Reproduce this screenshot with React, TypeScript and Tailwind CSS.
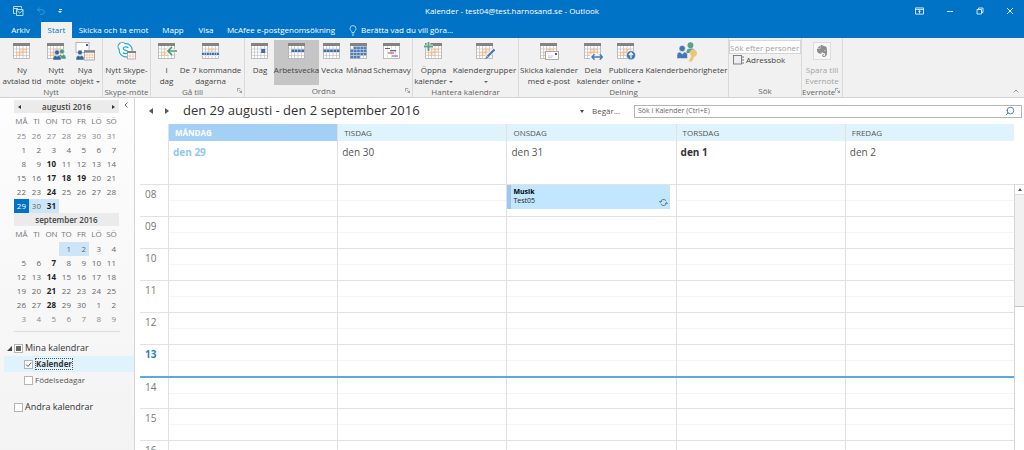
import React from "react";
import { ChevronUp, Search, Undo2 } from "lucide-react";
import { SiEvernote } from "react-icons/si";

type CalProps = { children?: React.ReactNode; accent?: boolean };

function Cal({ children, accent = true }: CalProps) {
  return (
    <svg viewBox="0 0 20 18" className="h-[18px] w-5 shrink-0" aria-hidden="true">
      <rect x="1.5" y="1.5" width="16" height="15" fill="#fff" stroke="#adadad" strokeWidth="0.8" />
      <rect x="1" y="1" width="17" height="3" fill="#838383" />
      <path d="M4.5 4v12.5M7.5 4v12.5M11 4v12.5M14.5 4v12.5M1.5 7h16M1.5 10.2h16M1.5 13.4h16" stroke="#c2c2c2" strokeWidth="0.7" />
      {accent && <path d="M7.7 7.2h3.2v3H7.7zM11.1 7.2h3.2v3h-3.2zM7.7 10.4h3.2v3H7.7zM4.6 10.4h3v3h-3z" fill="#fdeee2" stroke="#efae80" strokeWidth="0.6" />}
      {children}
    </svg>
  );
}

function Person({ x, y, color }: { x: number; y: number; color: string }) {
  return (
    <g fill={color} stroke="#f0f0f0" strokeWidth="0.5">
      <path d={`M${x - 4} ${y + 7.5}v-2a2.8 2.8 0 0 1 2.8-2.5l1.2 1 1.2-1a2.8 2.8 0 0 1 2.8 2.5v2z`} />
      <circle cx={x} cy={y} r="2.4" />
    </g>
  );
}

const icons: Record<string, React.ReactNode> = {
  appointment: <Cal />,
  meeting: (
    <Cal>
      <Person x={16} y={9.5} color="#4e9a78" />
      <Person x={11} y={10.5} color="#35649f" />
    </Cal>
  ),
  items: (
    <svg viewBox="0 0 20 20" className="h-5 w-5 shrink-0" aria-hidden="true">
      <rect x="1" y="0.5" width="13" height="10" fill="#fff" stroke="#a6a6a6" strokeWidth="0.8" />
      <rect x="11" y="2" width="2" height="2" fill="#35649f" />
      <rect x="9.5" y="8.5" width="10" height="9.5" fill="#fff" stroke="#9a9a9a" strokeWidth="0.8" />
      <path d="M9 8.5h11v2.2H9z" fill="#838383" />
      <path d="M12 11v7M14.7 11v7M17.3 11v7M9.5 13h10M9.5 15.5h10" stroke="#f0b48a" strokeWidth="0.6" />
      <Person x={5} y={10.5} color="#35649f" />
    </svg>
  ),
  skype: (
    <svg viewBox="0 0 20 18" className="h-[18px] w-5 shrink-0" aria-hidden="true">
      <path
        d="M8.5 1.6a6.3 6.3 0 0 1 6.4 7.7 4 4 0 0 1-5.4 5.5A6.4 6.4 0 0 1 2.3 7.5 4 4 0 0 1 8 1.7z"
        fill="#fff"
        stroke="#1ea7dc"
        strokeWidth="1.1"
      />
      <path d="M11.2 6C10.3 4.4 6.2 4.4 6.2 6.5c0 2.3 5 1.3 5 3.6 0 2.1-4.3 2-5.2.3" fill="none" stroke="#1ea7dc" strokeWidth="1.2" />
      <rect x="10.5" y="9.5" width="8" height="7.5" fill="#fff" stroke="#9a9a9a" strokeWidth="0.7" />
      <path d="M10 9h9v2h-9z" fill="#838383" />
      <path d="M13 11v6M16 11v6M10.5 14h8" stroke="#f0b48a" strokeWidth="0.6" />
    </svg>
  ),
  today: (
    <Cal>
      <path d="M9.5 9h10.5M14 5l-4 4 4 4" fill="none" stroke="#f0f0f0" strokeWidth="3.5" />
      <path d="M11 9h9M15 5l-4 4 4 4" fill="none" stroke="#4e9a78" strokeWidth="1.7" />
    </Cal>
  ),
  next7: (
    <Cal>
      <path d="M0 10h19v4H0z" fill="#dce7f4" />
      <path d="M1 11.8h17" stroke="#3a6bab" strokeWidth="2.2" strokeDasharray="1.9 0.6" />
    </Cal>
  ),
  day: (
    <Cal accent={false}>
      <rect x="11.2" y="7" width="4" height="4" fill="#3a6bab" />
    </Cal>
  ),
  workweek: (
    <Cal accent={false}>
      <path d="M4.5 8.8h13" stroke="#3a6bab" strokeWidth="2.4" strokeDasharray="2.7 0.6" />
    </Cal>
  ),
  week: (
    <Cal accent={false}>
      <path d="M1.5 8.8h16" stroke="#3a6bab" strokeWidth="2.4" strokeDasharray="2.7 0.6" />
    </Cal>
  ),
  month: (
    <Cal accent={false}>
      <path d="M4.8 5.7h13M1.5 8.8h16M1.5 12h16M1.5 15.1h10" stroke="#4a7dbb" strokeWidth="2.4" strokeDasharray="2.7 0.6" />
    </Cal>
  ),
  schedule: (
    <svg viewBox="0 0 20 18" className="h-[18px] w-5 shrink-0" aria-hidden="true">
      <rect x="1.5" y="1.5" width="16" height="15" fill="#fff" stroke="#adadad" strokeWidth="0.8" />
      <path d="M1 1h17v3H1z" fill="#838383" />
      <path d="M5.5 4v12.5M9.5 4v12.5M13.5 4v12.5" stroke="#d0d0d0" strokeWidth="0.6" />
      <path d="M3 6.5h5M10 14h6" stroke="#8b4a9c" strokeWidth="1.2" />
      <path d="M6 11h6" stroke="#d0603a" strokeWidth="1.2" />
      <path d="M8 8.7h6" stroke="#35649f" strokeWidth="1.2" />
    </svg>
  ),
  open: (
    <Cal>
      <path d="M4.5 0v9M0 4.5h9" stroke="#f0f0f0" strokeWidth="3.6" />
      <path d="M4.5 0v9M0 4.5h9" stroke="#5ba585" strokeWidth="1.8" />
    </Cal>
  ),
  groups: (
    <Cal>
      <path d="m20 7-9 9" stroke="#f0f0f0" strokeWidth="4" />
      <path d="m19.5 7.5-7 7" stroke="#4179b8" strokeWidth="2.2" />
      <path d="m10.5 17 1-3 2 2z" fill="#4179b8" />
    </Cal>
  ),
  send: (
    <Cal>
      <rect x="6.5" y="9.5" width="13" height="8" fill="#fff" stroke="#9a9a9a" strokeWidth="0.8" />
      <rect x="16" y="11" width="2" height="2" fill="#35649f" />
      <path d="M9 14h5M9 15.7h4" stroke="#b5b5b5" strokeWidth="0.7" />
    </Cal>
  ),
  share: (
    <Cal>
      <path d="M7 12h13v6H7z" fill="#f0f0f0" />
      <path d="M9 15h10M11.5 12.3 9 15l2.5 2.7M16.8 12.3l2.5 2.7-2.5 2.7" fill="none" stroke="#4179b8" strokeWidth="1.4" />
    </Cal>
  ),
  publish: (
    <Cal>
      <circle cx="15" cy="13.3" r="4.6" fill="#4179b8" stroke="#f0f0f0" strokeWidth="0.7" />
      <path d="M15 16.2v-5M12.9 13l2.1-2.2 2.1 2.2" fill="none" stroke="#fff" strokeWidth="1.2" />
    </Cal>
  ),
  permissions: (
    <svg viewBox="0 0 20 20" className="h-5 w-5 shrink-0" aria-hidden="true">
      <g fill="#5ba08c">
        <circle cx="13.5" cy="3.2" r="2.9" />
        <path d="M9.5 11V9a3 3 0 0 1 3-2.5h3a3 3 0 0 1 3 2.5v2z" />
      </g>
      <g fill="#4477b5" stroke="#f0f0f0" strokeWidth="0.5">
        <path d="M0 16.5V13a3 3 0 0 1 3-3l2.2 2L7.5 10a3 3 0 0 1 3 3v3.5z" />
        <circle cx="5.2" cy="6.5" r="3.1" />
      </g>
      <path d="m11.5 19.5 2.5-5.5a3.7 3.7 0 1 1 3.3.9l-.8 1.3.3 1.3-1.3.5-.8 2z" fill="#ecc675" stroke="#f0f0f0" strokeWidth="0.4" />
    </svg>
  ),
};

type Cmd = { icon: string; lines: string[]; w: string; menu?: boolean; active?: boolean };
type Group = { name: string; w: string; launcher?: boolean; cmds: Cmd[] };

const groups: Group[] = [
  {
    name: "Nytt",
    w: "w-[103px]",
    cmds: [
      { icon: "appointment", lines: ["Ny", "avtalad tid"], w: "w-11" },
      { icon: "meeting", lines: ["Nytt", "möte"], w: "w-6" },
      { icon: "items", lines: ["Nya", "objekt"], w: "w-[34px]", menu: true },
    ],
  },
  { name: "Skype-möte", w: "w-12", cmds: [{ icon: "skype", lines: ["Nytt Skype-", "möte"], w: "w-11" }] },
  {
    name: "Gå till",
    w: "w-[94px]",
    launcher: true,
    cmds: [
      { icon: "today", lines: ["I", "dag"], w: "w-[26px]" },
      { icon: "next7", lines: ["De 7 kommande", "dagarna"], w: "w-[62px]" },
    ],
  },
  {
    name: "Ordna",
    w: "w-[168px]",
    launcher: true,
    cmds: [
      { icon: "day", lines: ["Dag"], w: "w-7" },
      { icon: "workweek", lines: ["Arbetsvecka"], w: "w-[45px]", active: true },
      { icon: "week", lines: ["Vecka"], w: "w-[26px]" },
      { icon: "month", lines: ["Månad"], w: "w-7" },
      { icon: "schedule", lines: ["Schemavy"], w: "w-[38px]" },
    ],
  },
  {
    name: "Hantera kalendrar",
    w: "w-[106px]",
    cmds: [
      { icon: "open", lines: ["Öppna", "kalender"], w: "w-[38px]", menu: true },
      { icon: "groups", lines: ["Kalendergrupper", ""], w: "w-[64px]", menu: true },
    ],
  },
  {
    name: "Delning",
    w: "w-[210px]",
    cmds: [
      { icon: "send", lines: ["Skicka kalender", "med e-post"], w: "w-[60px]" },
      { icon: "share", lines: ["Dela", "kalender"], w: "w-7" },
      { icon: "publish", lines: ["Publicera", "online"], w: "w-[38px]", menu: true },
      { icon: "permissions", lines: ["Kalenderbehörigheter"], w: "w-[83px]" },
    ],
  },
];

function Caret() {
  return <span className="ml-0.5 inline-block border-x-2 border-t-2 border-x-transparent border-t-[#666] align-middle" />;
}

function Launcher() {
  return (
    <svg viewBox="0 0 6 6" className="absolute right-0.5 bottom-1 size-[5px]" aria-hidden="true">
      <path d="M.5 4V.5H4M2.5 2.5l3 3M5.5 3v2.5H3" fill="none" stroke="#777" strokeWidth="0.8" />
    </svg>
  );
}

function RibbonGroup({ name, w, launcher, children }: { name: string; w: string; launcher?: boolean; children: React.ReactNode }) {
  return (
    <section aria-label={name} className={`relative flex shrink-0 flex-col border-r border-[#dadada] pt-0.5 ${w}`}>
      <div className="flex h-[46px] justify-center">{children}</div>
      <div className={`text-center text-[8px] leading-3 text-[#666] ${launcher ? "pr-2.5" : ""}`}>{name}</div>
      {launcher && <Launcher />}
    </section>
  );
}

function Ribbon() {
  return (
    <div className="flex h-[60px] shrink-0 border-b border-[#d2d2d2] bg-[#f1f1f1] text-[8px] text-[#444]">
      {groups.map((g) => (
        <RibbonGroup key={g.name} name={g.name} w={g.w} launcher={g.launcher}>
          {g.cmds.map((c) => (
            <button
              key={c.icon}
              className={`flex shrink-0 flex-col items-center pt-0.5 leading-[11px] whitespace-nowrap ${c.w} ${c.active ? "bg-[#c5c5c5]" : ""}`}
            >
              <span className="flex h-[22px] shrink-0 items-start">{icons[c.icon]}</span>
              {c.lines.map((l, i) => (
                <span key={i} className="h-[11px]">
                  {l}
                  {c.menu && i === 1 && <Caret />}
                </span>
              ))}
            </button>
          ))}
        </RibbonGroup>
      ))}
      <RibbonGroup name="Sök" w="w-[73px]">
        <div className="flex w-full flex-col items-start">
          <input
            aria-label="Sök efter personer"
            placeholder="Sök efter personer"
            className="h-[14px] w-full border border-[#d6d6d6] bg-white text-[8px] placeholder:text-[#a0a0a0]"
          />
          <button className="flex items-center gap-0.5 pl-1 leading-3">
            <svg viewBox="0 0 11 10" className="h-[10px] w-[11px]" aria-hidden="true">
              <rect x="0.5" y="0.5" width="8" height="8.5" fill="#eeeef2" stroke="#777" strokeWidth="0.9" />
              <path d="M10 1v8" stroke="#777" strokeDasharray="2 1" />
            </svg>
            Adressbok
          </button>
        </div>
      </RibbonGroup>
      <RibbonGroup name="Evernote" w="w-[41px]" launcher>
        <button disabled className="flex flex-col items-center pt-0.5 leading-[11px] text-[#a3a3a3]">
          <span className="flex h-[22px] items-start">
            <span className="flex size-[18px] items-center justify-center border border-[#dcdcdc] bg-[#f7f7f7]">
              <SiEvernote className="size-3 text-[#8f8f8f]" />
            </span>
          </span>
          <span>Spara till</span>
          <span>Evernote</span>
        </button>
      </RibbonGroup>
      <button aria-label="Dölj menyfliksområdet" className="mt-auto mr-1 mb-0.5 ml-auto">
        <ChevronUp className="size-2 text-[#666]" />
      </button>
    </div>
  );
}

function TitleBar() {
  return (
    <header className="grid h-[22px] shrink-0 grid-cols-3 items-center text-white">
      <div className="flex items-center gap-3 pl-3">
        <button aria-label="Skicka och ta emot alla">
          <svg viewBox="0 0 12 12" className="size-3" fill="none" stroke="#b8dbf5" aria-hidden="true">
            <path d="M3.5 8.5h-2v-7h8v2M2 3.5h4M4.5 4.5h6.5v6H4.5zM4.5 5l3.2 3L11 5" />
          </svg>
        </button>
        <button aria-label="Ångra">
          <Undo2 className="size-2.5 text-[#4c9bda]" />
        </button>
        <button aria-label="Anpassa" className="flex flex-col items-center gap-px">
          <span className="h-px w-[3px] bg-white" />
          <span className="border-x-2 border-t-2 border-x-transparent border-t-white" />
        </button>
      </div>
      <h1 className="text-center text-[8px] whitespace-nowrap">Kalender - test04@test.harnosand.se - Outlook</h1>
      <div className="flex items-center justify-end gap-[22px] pr-[10px]">
        <button aria-label="Visningsalternativ">
          <svg viewBox="0 0 9 8" className="h-2 w-[9px]" fill="none" stroke="#fff" strokeWidth="0.8" aria-hidden="true">
            <path d="M.5.9h8v6.2h-8zM.5 2.4h8M4.5 6.5v-3M3.2 4.6l1.3-1.3 1.3 1.3" />
          </svg>
        </button>
        <button aria-label="Minimera">
          <svg viewBox="0 0 8 8" className="size-2" aria-hidden="true">
            <path d="M1 4.5h6" stroke="#fff" strokeWidth="0.8" />
          </svg>
        </button>
        <button aria-label="Återställ">
          <svg viewBox="0 0 8 8" className="size-2" fill="none" stroke="#fff" strokeWidth="0.8" aria-hidden="true">
            <path d="M1 2.5h4.5V7H1zM2.5 2.3V1H7v4.5H5.7" />
          </svg>
        </button>
        <button aria-label="Stäng">
          <svg viewBox="0 0 8 8" className="size-2" aria-hidden="true">
            <path d="m1 1 6 6M7 1 1 7" stroke="#fff" strokeWidth="0.9" />
          </svg>
        </button>
      </div>
    </header>
  );
}

function Tabs() {
  return (
    <nav className="flex h-4 shrink-0 items-stretch text-[8px] whitespace-nowrap text-white">
      <button className="w-[41px]">Arkiv</button>
      <button className="w-[31px] bg-[#f1f1f1] text-[#0173c7]">Start</button>
      <button className="w-[83px]">Skicka och ta emot</button>
      <button className="w-9">Mapp</button>
      <button className="w-[30px]">Visa</button>
      <button className="w-[120px]">McAfee e-postgenomsökning</button>
      <button className="flex items-center gap-1 pl-2">
        <svg viewBox="0 0 8 11" className="h-[11px] w-2" fill="none" stroke="#d5eafa" strokeWidth="0.8" aria-hidden="true">
          <path d="M2.8 7.5C2.8 6 1 5.5 1 3.6a3 3 0 0 1 6 0C7 5.5 5.2 6 5.2 7.5zM2.8 9h2.4M3.2 10.3h1.6" />
        </svg>
        Berätta vad du vill göra...
      </button>
    </nav>
  );
}

type Month = { name: string; nav?: boolean; weeks: (number | null)[][]; bold: number[]; range: number[]; current?: number; muted: number[] };

const months: Month[] = [
  {
    name: "augusti 2016",
    nav: true,
    weeks: [
      [25, 26, 27, 28, 29, 30, 31],
      [1, 2, 3, 4, 5, 6, 7],
      [8, 9, 10, 11, 12, 13, 14],
      [15, 16, 17, 18, 19, 20, 21],
      [22, 23, 24, 25, 26, 27, 28],
      [29, 30, 31, null, null, null, null],
    ],
    bold: [10, 17, 18, 19, 24, 31],
    range: [30, 31],
    current: 29,
    muted: [0],
  },
  {
    name: "september 2016",
    weeks: [
      [null, null, null, 1, 2, 3, 4],
      [5, 6, 7, 8, 9, 10, 11],
      [12, 13, 14, 15, 16, 17, 18],
      [19, 20, 21, 22, 23, 24, 25],
      [26, 27, 28, 29, 30, 1, 2],
      [3, 4, 5, 6, 7, 8, 9],
    ],
    bold: [7, 14, 21, 28],
    range: [1, 2],
    muted: [5],
  },
];

const dayHeads = ["MÅ", "TI", "ON", "TO", "FR", "LÖ", "SÖ"];

function dayClass(m: Month, d: number | null, row: number) {
  if (d === null) return "";
  const edge = m.muted.includes(row);
  if (!edge && d === m.current) return row === 5 ? "bg-[#0173c7] text-white" : "text-[#666]";
  const lead = m.nav ? row === 5 : row === 0;
  const bold = !edge && m.bold.includes(d) ? "font-bold text-[#222]" : edge ? "text-[#888]" : "text-[#666]";
  return `${bold} ${lead && m.range.includes(d) ? "bg-[#cde6f7]" : ""}`;
}

function MiniMonth({ m }: { m: Month }) {
  return (
    <div>
      <div className="flex h-[13px] items-center justify-between bg-[#ebebeb] px-1">
        {m.nav ? (
          <button aria-label="Föregående månad" className="border-y-2 border-r-[3px] border-y-transparent border-r-[#333]" />
        ) : (
          <span />
        )}
        <h2 className="text-[8px] leading-none font-semibold text-[#444]">{m.name}</h2>
        {m.nav ? (
          <button aria-label="Nästa månad" className="border-y-2 border-l-[3px] border-y-transparent border-l-[#333]" />
        ) : (
          <span />
        )}
      </div>
      <table className="w-full table-fixed border-collapse text-[8px] leading-none">
        <thead>
          <tr className="h-4 text-[#777]">
            {dayHeads.map((d) => (
              <th key={d} className="p-0 text-center font-normal">
                {d}
              </th>
            ))}
          </tr>
        </thead>
        <tbody>
          {m.weeks.map((w, r) => (
            <tr key={r} className="h-[14px]">
              {w.map((d, i) => (
                <td key={i} className={`p-0 pr-[3px] text-right ${dayClass(m, d, r)}`}>
                  {d}
                </td>
              ))}
            </tr>
          ))}
        </tbody>
      </table>
    </div>
  );
}

function Check({ id, checked, mixed }: { id: string; checked?: boolean; mixed?: boolean }) {
  return (
    <span className="relative flex size-[9px] shrink-0">
      <input id={id} type="checkbox" defaultChecked={checked} className="peer size-[9px] appearance-none border border-[#b5b5b5] bg-white" />
      {mixed && <span className="pointer-events-none absolute inset-[2px] bg-[#666]" />}
      <svg viewBox="0 0 9 9" className="pointer-events-none absolute inset-0 hidden size-[9px] peer-checked:block" aria-hidden="true">
        <path d="m2 4.5 2 2L7.2 2.5" fill="none" stroke="#555" />
      </svg>
    </span>
  );
}

function Sidebar() {
  return (
    <aside className="flex w-[135px] shrink-0 flex-col border-r border-[#d6d6d6] bg-linear-to-b from-[#fdfdfd] to-[#f3f3f3]">
      <div className="flex pt-0.5">
        <div className="ml-3.5 w-[105px]">
          {months.map((m) => (
            <MiniMonth key={m.name} m={m} />
          ))}
        </div>
        <button aria-label="Minimera mappfönstret" className="mt-0.5 ml-[5px] flex h-2 items-start">
          <svg viewBox="0 0 4 6" className="h-1.5 w-1" aria-hidden="true">
            <path d="M3.5.5 1 3l2.5 2.5" fill="none" stroke="#666" />
          </svg>
        </button>
      </div>
      <div className="mt-[5px] ml-3.5 w-[106px] border-t border-[#dcdcdc]" />
      <div className="mt-2 flex h-4 items-center pl-[7px] text-[9px] text-[#333]">
        <svg viewBox="0 0 5 5" className="mr-0.5 size-[5px]" aria-hidden="true">
          <path d="M5 0v5H0z" fill="#444" />
        </svg>
        <Check id="mine" mixed />
        <label htmlFor="mine" className="pl-0.5">
          Mina kalendrar
        </label>
      </div>
      <div className="ml-1 flex h-4 items-center bg-[#dff3fd] pl-5 text-[8px] text-[#333]">
        <Check id="cal" checked />
        <label htmlFor="cal" className="ml-0.5 border border-dotted border-[#555] leading-[10px] font-bold">
          Kalender
        </label>
      </div>
      <div className="ml-1 flex h-4 items-center pl-5 text-[8px] text-[#555]">
        <Check id="birthdays" />
        <label htmlFor="birthdays" className="pl-0.5">
          Födelsedagar
        </label>
      </div>
      <div className="mt-[11px] flex h-4 items-center pl-3.5 text-[9px] text-[#333]">
        <Check id="other" />
        <label htmlFor="other" className="pl-0.5">
          Andra kalendrar
        </label>
      </div>
    </aside>
  );
}

const days = [
  { name: "MÅNDAG", date: "den 29", past: true },
  { name: "TISDAG", date: "den 30" },
  { name: "ONSDAG", date: "den 31" },
  { name: "TORSDAG", date: "den 1", strong: true },
  { name: "FREDAG", date: "den 2" },
];

const hours = ["08", "09", "10", "11", "12", "13", "14", "15", "16"];

function Schedule() {
  return (
    <main className="flex min-w-0 flex-1 flex-col bg-white pl-[5px]">
      <div className="flex h-[26px] shrink-0 items-center">
        <button aria-label="Bakåt" className="ml-[9px] border-y-[3px] border-r-4 border-y-transparent border-r-[#555]" />
        <button aria-label="Framåt" className="ml-3 border-y-[3px] border-l-4 border-y-transparent border-l-[#555]" />
        <h2 className="ml-3.5 text-[13px] whitespace-nowrap text-[#333]">den 29 augusti - den 2 september 2016</h2>
        <button className="ml-auto flex items-center gap-2 text-[8px] text-[#555]">
          <span className="border-x-2 border-t-[3px] border-x-transparent border-t-[#444]" />
          Begär...
        </button>
        <div className="mr-0.5 ml-3.5 flex h-[13px] w-[388px] items-center border border-[#b5b5b5] pr-1.5">
          <input aria-label="Sök i Kalender" placeholder="Sök i Kalender (Ctrl+E)" className="min-w-0 flex-1 pl-[3px] text-[7px] placeholder:text-[#666]" />
          <Search className="size-2.5 -scale-x-100 text-[#2e6da8]" />
        </div>
      </div>
      <div className="flex shrink-0 pr-2.5">
        <div className="w-7 shrink-0" />
        {days.map((d) => (
          <div key={d.name} className="flex-1 border-l border-[#e1e1e1]">
            <div className={`h-[17px] pl-1.5 text-[8px] leading-[17px] ${d.past ? "bg-[#a5d0f5] font-bold text-white" : "bg-[#dff3fd] text-[#555]"}`}>
              {d.name}
            </div>
            <div className={`h-[43px] pt-1 pl-1 text-[10px] leading-[14px] ${d.past ? "font-bold text-[#93c5ef]" : d.strong ? "font-bold text-[#333]" : "text-[#555]"}`}>
              {d.date}
            </div>
          </div>
        ))}
      </div>
      <div className="flex min-h-0 flex-1">
        <div className="min-w-0 flex-1 overflow-hidden">
          {hours.map((h, i) => (
            <div key={h} className={`flex h-8 ${h === "14" ? "border-t-2 border-[#5aa9e6]" : "border-t border-[#e1e1e1]"}`}>
              <div className={`w-7 shrink-0 pl-[5px] text-[10px] leading-[18px] ${h === "13" ? "font-bold text-[#2a7fc4]" : "text-[#777]"}`}>{h}</div>
              {days.map((d) => (
                <div key={d.name} className="flex flex-1 flex-col border-l border-[#e1e1e1]">
                  {i === 0 && d.name === "ONSDAG" ? (
                    <div className="mr-1.5 flex h-6 shrink-0 border-l-4 border-[#9cc8f0] bg-[#c1e6fd] px-0.5 text-[7px] leading-[9px] text-[#222]">
                      <div className="flex-1 pt-0.5">
                        <div className="font-bold text-black">Musik</div>
                        <div>Test05</div>
                      </div>
                      <svg viewBox="0 0 10 10" className="mt-auto mb-0.5 size-[9px]" fill="none" stroke="#4a6478" strokeWidth="0.9" aria-hidden="true">
                        <path d="M1.7 4.5a3.4 3.4 0 0 1 6.3-1.2M8.3 5.5A3.4 3.4 0 0 1 2 6.7M0 3.5l1.6 1.5L3.2 3.5M6.8 6.5l1.6-1.5L10 6.5" />
                      </svg>
                    </div>
                  ) : (
                    <div className="h-4 border-b border-[#f4f4f4]" />
                  )}
                </div>
              ))}
            </div>
          ))}
        </div>
        <div className="flex w-2.5 shrink-0 flex-col border-l border-[#d6d6d6] bg-[#f1f1f1]">
          <button aria-label="Rulla uppåt" className="flex h-[11px] items-center justify-center border-y border-[#dcdcdc] bg-white">
            <span className="border-x-2 border-b-[3px] border-x-transparent border-b-[#555]" />
          </button>
          <div className="mt-[111px] flex-1 border-t border-[#c4c4c4] bg-white" />
        </div>
      </div>
    </main>
  );
}

export default function App() {
  return (
    <div className="flex h-screen flex-col overflow-hidden bg-[#0173c7] font-['Open_Sans','Noto_Sans',sans-serif]">
      <TitleBar />
      <Tabs />
      <Ribbon />
      <div className="flex min-h-0 flex-1">
        <Sidebar />
        <Schedule />
      </div>
    </div>
  );
}
